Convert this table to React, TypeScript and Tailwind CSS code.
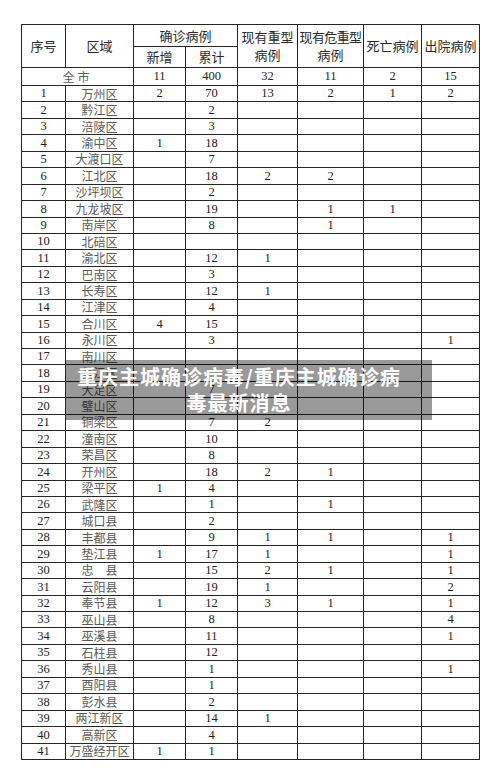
import React from "react";

const data: string[] = [
  "1|万州区|2|70|13|2|1|2",
  "2|黔江区||2||||",
  "3|涪陵区||3||||",
  "4|渝中区|1|18||||",
  "5|大渡口区||7||||",
  "6|江北区||18|2|2||",
  "7|沙坪坝区||2||||",
  "8|九龙坡区||19||1|1|",
  "9|南岸区||8||1||",
  "10|北碚区||||||",
  "11|渝北区||12|1|||",
  "12|巴南区||3||||",
  "13|长寿区||12|1|||",
  "14|江津区||4||||",
  "15|合川区|4|15||||",
  "16|永川区||3||||1",
  "17|南川区||||||",
  "18|綦江区||||||",
  "19|大足区||7||||",
  "20|璧山区||||||",
  "21|铜梁区||7|2|||",
  "22|潼南区||10||||",
  "23|荣昌区||8||||",
  "24|开州区||18|2|1||",
  "25|梁平区|1|4||||",
  "26|武隆区||1||1||",
  "27|城口县||2||||",
  "28|丰都县||9|1|1||1",
  "29|垫江县|1|17|1|||1",
  "30|忠　县||15|2|1||1",
  "31|云阳县||19|1|||2",
  "32|奉节县|1|12|3|1||1",
  "33|巫山县||8||||4",
  "34|巫溪县||11||||1",
  "35|石柱县||12||||",
  "36|秀山县||1||||1",
  "37|酉阳县||1||||",
  "38|彭水县||2||||",
  "39|两江新区||14|1|||",
  "40|高新区||4||||",
  "41|万盛经开区|1|1||||",
];

const cell = "border-r border-b border-[#262626] flex items-center justify-center";
const num = "font-['Liberation_Serif',serif] text-[12.5px] text-[#222] leading-none";
const head = "font-['Noto_Sans_CJK_SC',sans-serif] text-[13px] text-[#2a2a2a] leading-[18px]";
const name = "font-['Noto_Sans_CJK_SC',sans-serif] text-[12px] text-[#5a5a5a] leading-none";

export default function App() {
  return (
    <div className="relative w-[500px] h-[784px] bg-white overflow-hidden">
      <div className="pt-[24px] pl-[21px]">
        <div className="grid grid-cols-[44px_68px_52px_52px_60px_66px_58px_58px] grid-rows-[22px_21px_18px_repeat(41,16.44px)] border-l border-t border-[#262626] w-max">
          <div className={`${cell} row-span-2 ${head}`}>序号</div>
          <div className={`${cell} row-span-2 ${head}`}>区域</div>
          <div className={`${cell} col-span-2 ${head}`}>确诊病例</div>
          <div className={`${cell} row-span-2 ${head} flex-col`}>
            <span>现有重型</span>
            <span>病例</span>
          </div>
          <div className={`${cell} row-span-2 ${head} flex-col`}>
            <span className="tracking-[-0.6px]">现有危重型</span>
            <span>病例</span>
          </div>
          <div className={`${cell} row-span-2 ${head}`}>死亡病例</div>
          <div className={`${cell} row-span-2 ${head}`}>出院病例</div>
          <div className={`${cell} ${head}`}>新增</div>
          <div className={`${cell} ${head}`}>累计</div>

          <div className={`${cell} col-span-2 ${name} tracking-[3px]`}>全市</div>
          <div className={`${cell} ${num}`}>11</div>
          <div className={`${cell} ${num}`}>400</div>
          <div className={`${cell} ${num}`}>32</div>
          <div className={`${cell} ${num}`}>11</div>
          <div className={`${cell} ${num}`}>2</div>
          <div className={`${cell} ${num}`}>15</div>

          {data.map((r) => {
            const f = r.split("|");
            return (
              <React.Fragment key={f[0]}>
                <div className={`${cell} ${num}`}>{f[0]}</div>
                <div className={`${cell} ${name} whitespace-nowrap`}>{f[1]}</div>
                <div className={`${cell} ${num}`}>{f[2]}</div>
                <div className={`${cell} ${num}`}>{f[3]}</div>
                <div className={`${cell} ${num}`}>{f[4]}</div>
                <div className={`${cell} ${num}`}>{f[5]}</div>
                <div className={`${cell} ${num}`}>{f[6]}</div>
                <div className={`${cell} ${num}`}>{f[7]}</div>
              </React.Fragment>
            );
          })}
        </div>
      </div>

      <div className="absolute left-[66px] top-[360px] w-[366px] h-[60px] bg-black/40">
        <div className="w-[326px] ml-[10px] pt-[4px] text-center text-white font-bold text-[20px] leading-[26px] tracking-[1px] font-['Noto_Sans_CJK_SC',sans-serif]">
          <div className="whitespace-nowrap">重庆主城确诊病毒/重庆主城确诊病</div>
          <div className="whitespace-nowrap">毒最新消息</div>
        </div>
      </div>
    </div>
  );
}
